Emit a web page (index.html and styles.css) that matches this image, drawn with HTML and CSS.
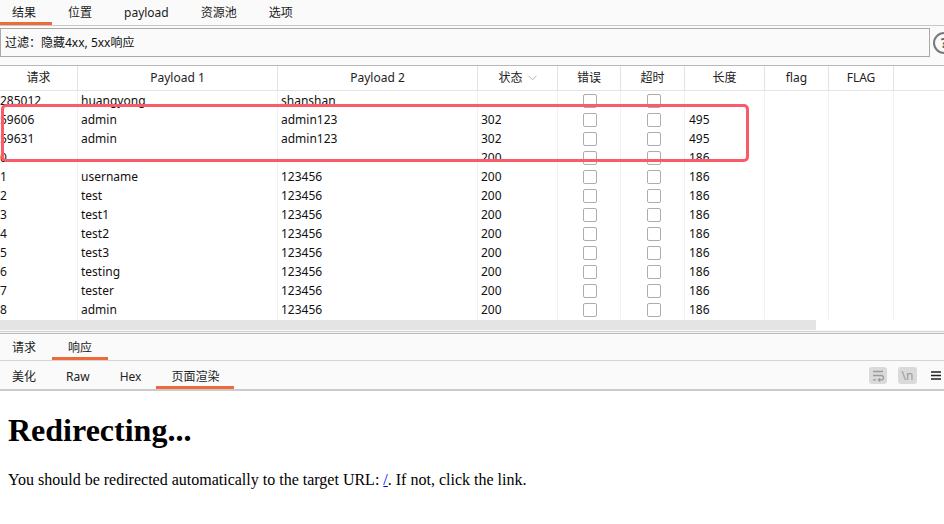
FILE: index.html
```html
<!DOCTYPE html>
<html>
<head>
<meta charset="utf-8">
<link rel="stylesheet" href="styles.css">
</head>
<body>
<div class="tabs top-tabs">
  <div class="tab active">结果</div>
  <div class="tab">位置</div>
  <div class="tab">payload</div>
  <div class="tab">资源池</div>
  <div class="tab">选项</div>
</div>
<div class="filter-row">
  <div class="filter">过滤：隐藏4xx, 5xx响应</div>
  <div class="help">?</div>
</div>
<div class="table">
  <div class="row head">
    <div class="c">请求</div>
    <div class="c">Payload 1</div>
    <div class="c">Payload 2</div>
    <div class="c">状态<svg class="chev" width="9" height="6" viewBox="0 0 9 6"><path d="M0.5 0.8 L4.5 4.8 L8.5 0.8" fill="none" stroke="#b4b4b4" stroke-width="1"/></svg></div>
    <div class="c">错误</div>
    <div class="c">超时</div>
    <div class="c">长度</div>
    <div class="c">flag</div>
    <div class="c">FLAG</div>
    <div class="c"></div>
  </div>
  <div class="body">
    <div class="row"><div class="c num">285012</div><div class="c">huangyong</div><div class="c">shanshan</div><div class="c"></div><div class="c cb"><span class="box"></span></div><div class="c cb"><span class="box"></span></div><div class="c len"></div><div class="c"></div><div class="c"></div><div class="c"></div></div>
    <div class="row"><div class="c num">59606</div><div class="c">admin</div><div class="c">admin123</div><div class="c">302</div><div class="c cb"><span class="box"></span></div><div class="c cb"><span class="box"></span></div><div class="c len">495</div><div class="c"></div><div class="c"></div><div class="c"></div></div>
    <div class="row"><div class="c num">59631</div><div class="c">admin</div><div class="c">admin123</div><div class="c">302</div><div class="c cb"><span class="box"></span></div><div class="c cb"><span class="box"></span></div><div class="c len">495</div><div class="c"></div><div class="c"></div><div class="c"></div></div>
    <div class="row"><div class="c num">0</div><div class="c"></div><div class="c"></div><div class="c">200</div><div class="c cb"><span class="box"></span></div><div class="c cb"><span class="box"></span></div><div class="c len">186</div><div class="c"></div><div class="c"></div><div class="c"></div></div>
    <div class="row"><div class="c num">1</div><div class="c">username</div><div class="c">123456</div><div class="c">200</div><div class="c cb"><span class="box"></span></div><div class="c cb"><span class="box"></span></div><div class="c len">186</div><div class="c"></div><div class="c"></div><div class="c"></div></div>
    <div class="row"><div class="c num">2</div><div class="c">test</div><div class="c">123456</div><div class="c">200</div><div class="c cb"><span class="box"></span></div><div class="c cb"><span class="box"></span></div><div class="c len">186</div><div class="c"></div><div class="c"></div><div class="c"></div></div>
    <div class="row"><div class="c num">3</div><div class="c">test1</div><div class="c">123456</div><div class="c">200</div><div class="c cb"><span class="box"></span></div><div class="c cb"><span class="box"></span></div><div class="c len">186</div><div class="c"></div><div class="c"></div><div class="c"></div></div>
    <div class="row"><div class="c num">4</div><div class="c">test2</div><div class="c">123456</div><div class="c">200</div><div class="c cb"><span class="box"></span></div><div class="c cb"><span class="box"></span></div><div class="c len">186</div><div class="c"></div><div class="c"></div><div class="c"></div></div>
    <div class="row"><div class="c num">5</div><div class="c">test3</div><div class="c">123456</div><div class="c">200</div><div class="c cb"><span class="box"></span></div><div class="c cb"><span class="box"></span></div><div class="c len">186</div><div class="c"></div><div class="c"></div><div class="c"></div></div>
    <div class="row"><div class="c num">6</div><div class="c">testing</div><div class="c">123456</div><div class="c">200</div><div class="c cb"><span class="box"></span></div><div class="c cb"><span class="box"></span></div><div class="c len">186</div><div class="c"></div><div class="c"></div><div class="c"></div></div>
    <div class="row"><div class="c num">7</div><div class="c">tester</div><div class="c">123456</div><div class="c">200</div><div class="c cb"><span class="box"></span></div><div class="c cb"><span class="box"></span></div><div class="c len">186</div><div class="c"></div><div class="c"></div><div class="c"></div></div>
    <div class="row"><div class="c num">8</div><div class="c">admin</div><div class="c">123456</div><div class="c">200</div><div class="c cb"><span class="box"></span></div><div class="c cb"><span class="box"></span></div><div class="c len">186</div><div class="c"></div><div class="c"></div><div class="c"></div></div>
    <div class="highlight"></div>
  </div>
  <div class="hscroll"><div class="thumb"></div></div>
</div>
<div class="split"></div>
<div class="tabs bottom-tabs">
  <div class="tab">请求</div>
  <div class="tab active">响应</div>
</div>
<div class="subbar">
  <div class="tabs sub-tabs">
    <div class="tab">美化</div>
    <div class="tab">Raw</div>
    <div class="tab">Hex</div>
    <div class="tab active">页面渲染</div>
  </div>
  <div class="tools">
    <span class="tool"><svg width="18" height="17" viewBox="0 0 18 17"><path d="M4 4.5 H14 M4 8.5 H12.3 a2.2 2.2 0 0 1 0 4.4 H9.5 M11.1 11.2 L9.4 12.9 L11.1 14.6 M4 12.9 H7" fill="none" stroke="#9c9c9c" stroke-width="1.3"/></svg></span>
    <span class="tool nl">\n</span>
    <svg class="menu" width="10" height="9" viewBox="0 0 10 9"><path d="M0 1 H10 M0 4.5 H10 M0 8 H10" stroke="#222" stroke-width="1.4"/></svg>
  </div>
</div>
<div class="render">
  <h1>Redirecting...</h1>
  <p>You should be redirected automatically to the target URL: <a href="/">/</a>. If not, click the link.</p>
</div>
</body>
</html>
```

FILE: styles.css
```css
html, body {
  margin: 0;
  padding: 0;
}
body {
  width: 944px;
  height: 524px;
  overflow: hidden;
  background: #fafafa;
  font-family: "Noto Sans", "Noto Sans CJK SC", sans-serif;
  font-size: 12px;
  color: #1a1a1a;
}

.tabs {
  display: flex;
}
.tab {
  box-sizing: border-box;
  padding: 0 16px;
  border-bottom: 3px solid transparent;
  white-space: nowrap;
  line-height: 17px;
}
.tab.active {
  border-bottom-color: #ef6a3a;
}

.top-tabs {
  height: 26px;
  margin-left: -4px;
  border-bottom: 1px solid #c8c8c8;
  box-sizing: border-box;
}
.top-tabs .tab {
  height: 25px;
  padding-top: 4px;
}

.filter-row {
  display: flex;
  align-items: center;
  margin: 2px 0 8px;
}
.filter {
  flex: none;
  box-sizing: border-box;
  width: 930px;
  height: 29px;
  border: 1px solid #a9a9a9;
  background: #fafafa;
  padding-left: 4px;
  line-height: 27px;
  color: #111;
}
.help {
  flex: none;
  box-sizing: border-box;
  width: 22px;
  height: 22px;
  margin-left: 3px;
  border: 2px solid #7a7a7a;
  border-radius: 50%;
  color: #6a6a6a;
  font-weight: bold;
  font-size: 14px;
  line-height: 18px;
  text-align: center;
}

.table {
  border-top: 1px solid #b8b8b8;
  background: #fff;
}
.row {
  display: grid;
  grid-template-columns: 77px 200px 200px 80px 63px 64px 80px 64px 65px 1fr;
  height: 19px;
}
.row .c {
  box-sizing: border-box;
  padding-left: 3px;
  line-height: 19px;
  white-space: nowrap;
  overflow: hidden;
  border-left: 1px solid #f1f1f1;
  color: #111;
}
.row .c:first-child {
  border-left: none;
}
.row.head {
  height: 25px;
  border-bottom: 1px solid #e4e4e4;
  box-sizing: border-box;
}
.row.head .c {
  line-height: 24px;
  padding-left: 0;
  text-align: center;
  border-left-color: #e2e2e2;
  color: #222;
}
.chev {
  margin-left: 5px;
  vertical-align: 1px;
}
.row .c.num {
  padding-left: 0;
}
.row .c.len {
  padding-left: 4px;
}
.row .c.cb {
  display: flex;
  align-items: center;
  justify-content: center;
  padding-left: 2px;
}
.box {
  box-sizing: border-box;
  width: 14px;
  height: 14px;
  border: 1px solid #adadad;
  border-radius: 2px;
  background: #fff;
}

.body {
  position: relative;
  height: 229px;
  overflow: hidden;
}
.highlight {
  position: absolute;
  left: 1px;
  top: 13px;
  width: 748px;
  height: 58px;
  box-sizing: border-box;
  border: 3px solid #fb5a69;
  border-radius: 5px;
}

.hscroll {
  height: 10px;
  background: #fff;
}
.thumb {
  width: 816px;
  height: 10px;
  background: #e4e4e4;
}

.split {
  height: 1px;
  margin-top: 1px;
  border-top: 1px solid #d2d2d2;
  border-bottom: 1px solid #bcbcbc;
  background: #f4f4f4;
}

.bottom-tabs {
  height: 27px;
  margin-left: -4px;
  border-bottom: 1px solid #d4d4d4;
  box-sizing: border-box;
}
.bottom-tabs .tab {
  height: 26px;
  padding-top: 5px;
}

.subbar {
  display: flex;
  height: 30px;
  box-sizing: border-box;
  border-bottom: 2px solid #cbcbcb;
}
.sub-tabs {
  margin-left: -3px;
}
.sub-tabs .tab {
  height: 28px;
  padding: 7px 15px 0;
  color: #222;
}
.tools {
  margin-left: auto;
  display: flex;
  align-items: center;
  padding-right: 3px;
}
.tool {
  display: flex;
  align-items: center;
  justify-content: center;
  width: 18px;
  height: 17px;
  border-radius: 3px;
  background: #dadada;
  margin-right: 11px;
}
.tool.nl {
  width: 19px;
  color: #999;
  font-size: 12px;
  line-height: 17px;
  margin-right: 14px;
}
.menu {
  display: block;
}

.render {
  display: flow-root;
  background: #fff;
  padding: 0 8px;
  height: 140px;
  font-family: "Liberation Serif", serif;
  color: #000;
}
.render h1 {
  font-size: 32px;
  font-weight: bold;
  margin: 21.44px 0;
}
.render p {
  font-size: 16px;
  margin: 16px 0;
}
.render a {
  color: #0000ee;
}
```
